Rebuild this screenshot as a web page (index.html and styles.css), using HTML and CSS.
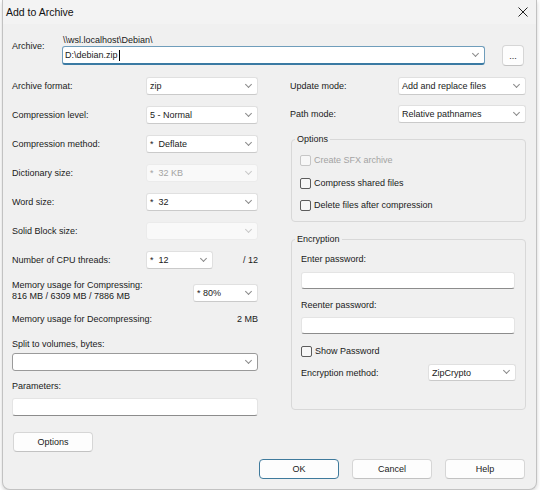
FILE: index.html
```html
<!DOCTYPE html>
<html>
<head>
<meta charset="utf-8">
<title>Add to Archive</title>
<link rel="stylesheet" href="styles.css">
</head>
<body>
<div class="window">
  <div class="titlebar">
    <span class="title">Add to Archive</span>
    <svg class="close" width="10" height="10" viewBox="0 0 10 10"><path d="M0.5 0.5 L9.5 9.5 M9.5 0.5 L0.5 9.5" stroke="#222" stroke-width="1" fill="none"/></svg>
  </div>

  <div class="archive">
    <div class="arch-label">Archive:</div>
    <div class="arch-main">
      <div class="arch-path">\\wsl.localhost\Debian\</div>
      <div class="combo focused"><span class="val">D:\debian.zip<span class="caret"></span></span><i class="chev"></i></div>
    </div>
    <button class="btn browse">...</button>
  </div>

  <div class="main">
    <div class="col-left">
      <div class="row"><span class="lbl">Archive format:</span><div class="combo w112"><span class="val">zip</span><i class="chev"></i></div></div>
      <div class="row"><span class="lbl">Compression level:</span><div class="combo w112"><span class="val">5 - Normal</span><i class="chev"></i></div></div>
      <div class="row"><span class="lbl">Compression method:</span><div class="combo w112"><span class="val">*&nbsp; Deflate</span><i class="chev"></i></div></div>
      <div class="row"><span class="lbl">Dictionary size:</span><div class="combo w112 disabled"><span class="val">*&nbsp; 32 KB</span><i class="chev"></i></div></div>
      <div class="row"><span class="lbl">Word size:</span><div class="combo w112"><span class="val">*&nbsp; 32</span><i class="chev"></i></div></div>
      <div class="row"><span class="lbl">Solid Block size:</span><div class="combo w112 disabled"><span class="val"></span><i class="chev"></i></div></div>
      <div class="row"><span class="lbl lbl-fixed">Number of CPU threads:</span><div class="combo w67"><span class="val">*&nbsp; 12</span><i class="chev"></i></div><span class="tail">/ 12</span></div>
      <div class="row mem"><span class="lbl two">Memory usage for Compressing:<br>816 MB / 6309 MB / 7886 MB</span><div class="combo w65"><span class="val">* 80%</span><i class="chev"></i></div></div>
      <div class="row decomp"><span class="lbl">Memory usage for Decompressing:</span><span class="tail">2 MB</span></div>
      <div class="lbl split-lbl">Split to volumes, bytes:</div>
      <div class="combo editable split"><span class="val"></span><i class="chev"></i></div>
      <div class="lbl param-lbl">Parameters:</div>
      <div class="edit param"></div>
    </div>

    <div class="col-right">
      <div class="row"><span class="lbl">Update mode:</span><div class="combo w128"><span class="val">Add and replace files</span><i class="chev"></i></div></div>
      <div class="row"><span class="lbl">Path mode:</span><div class="combo w128"><span class="val">Relative pathnames</span><i class="chev"></i></div></div>

      <fieldset class="group options">
        <legend>Options</legend>
        <div class="chk disabled"><span class="box"></span><span>Create SFX archive</span></div>
        <div class="chk"><span class="box"></span><span>Compress shared files</span></div>
        <div class="chk"><span class="box"></span><span>Delete files after compression</span></div>
      </fieldset>

      <fieldset class="group encryption">
        <legend>Encryption</legend>
        <div class="lbl">Enter password:</div>
        <div class="edit pw"></div>
        <div class="lbl pw-lbl2">Reenter password:</div>
        <div class="edit pw pw2"></div>
        <div class="chk show"><span class="box"></span><span>Show Password</span></div>
        <div class="row enc"><span class="lbl">Encryption method:</span><div class="combo w88"><span class="val">ZipCrypto</span><i class="chev"></i></div></div>
      </fieldset>
    </div>
  </div>

  <div class="footer">
    <button class="btn wide">Options</button>
    <div class="actions">
      <button class="btn wide default">OK</button>
      <button class="btn wide">Cancel</button>
      <button class="btn wide">Help</button>
    </div>
  </div>
</div>
</body>
</html>
```
FILE: styles.css
```css
* { box-sizing: border-box; }

body {
  margin: 0;
  background: #ffffff;
  font-family: "Liberation Sans", Arial, sans-serif;
  font-size: 9px;
  color: #1a1a1a;
}

.window {
  margin-left: 2px;
  width: 535px;
  height: 490px;
  background: #f0f0f0;
  border: 1px solid #c2c2c2;
  border-top: none;
  border-radius: 0 0 8px 8px;
  box-shadow: 0 2px 4px rgba(0, 0, 0, 0.18);
  overflow: hidden;
}

.titlebar {
  height: 24px;
  display: flex;
  align-items: center;
  justify-content: space-between;
  padding: 0 8px 0 3px;
  background: #f3f3f3;
}

.title {
  font-size: 10.5px;
  line-height: 12px;
  color: #111;
}

.close { display: block; }

.archive {
  display: flex;
  align-items: flex-start;
  height: 42px;
  padding: 10px 0 0 9px;
}

.arch-label {
  width: 50px;
  margin-top: 6px;
  line-height: 12px;
}

.arch-main { width: 423px; }

.arch-path {
  line-height: 12px;
  padding-left: 1px;
}

.combo {
  display: flex;
  align-items: center;
  justify-content: space-between;
  height: 18px;
  padding: 0 6px 0 3px;
  background: #ffffff;
  border: 1px solid #e0e0e0;
  border-bottom-color: #cacaca;
  border-radius: 3px;
  flex: none;
}

.combo .val {
  line-height: 12px;
  white-space: nowrap;
  display: flex;
  align-items: center;
}

.chev {
  display: block;
  width: 5px;
  height: 5px;
  border-right: 1px solid #8a8a8a;
  border-bottom: 1px solid #8a8a8a;
  transform: translateY(-2px) rotate(45deg);
  flex: none;
}

.combo.focused {
  height: 19px;
  border-color: #6f9dbb;
  border-bottom: 2px solid #3a7aa3;
  padding-left: 2px;
}

.caret {
  display: inline-block;
  width: 1px;
  height: 11px;
  margin-left: 1px;
  background: #000;
}

.combo.disabled {
  background: #f9f9f9;
  border-color: #ebebeb;
  color: #a3a3a3;
}

.combo.disabled .chev { border-color: #c8c8c8; }

.combo.editable {
  border: 1px solid #9a9a9a;
}

.w112 { width: 112px; }
.w67 { width: 67px; }
.w65 { width: 65px; }
.w128 { width: 128px; }
.w88 { width: 88px; margin-right: -1px; }

.btn {
  font-family: inherit;
  font-size: 9px;
  color: #1a1a1a;
  background: #fdfdfd;
  border: 1px solid #d6d6d6;
  border-bottom-color: #c2c2c2;
  border-radius: 4px;
  padding: 0;
  line-height: 12px;
}

.browse {
  width: 22px;
  height: 21px;
  margin-left: 17px;
  margin-top: 11px;
}

.main {
  display: grid;
  grid-template-columns: 246px 237px;
  column-gap: 32px;
  align-items: start;
  padding-left: 9px;
  margin-top: 11px;
}

.lbl { line-height: 12px; }

.row {
  display: flex;
  align-items: center;
  justify-content: space-between;
  height: 18px;
}

.col-left .row + .row { margin-top: 11px; }

.lbl-fixed { width: 134px; flex: none; }

.tail { margin-left: auto; line-height: 12px; }

.row.mem {
  height: 22px;
  align-items: flex-end;
}

.lbl.two { line-height: 11px; }

.row.decomp {
  height: 12px;
  margin-top: 10px;
}

.split-lbl { margin-top: 13px; }

.split { margin-top: 3px; width: 246px; }

.param-lbl { margin-top: 9px; }

.edit {
  background: #ffffff;
  border: 1px solid #e4e4e4;
  border-bottom-color: #8c8c8c;
  border-radius: 3px;
}

.param {
  height: 18px;
  margin-top: 6px;
}

.col-right .row { padding-right: 1px; }
.col-right .row + .row { margin-top: 10px; }

.group {
  margin: 10px 1px 0 1px;
  min-width: 0;
  border: 1px solid #d8d8d8;
  border-radius: 4px;
}

.group legend {
  padding: 0 2px;
  line-height: 12px;
  font-size: 9px;
}

.options {
  padding: 9px 10px 10px 8px;
}

.options legend { margin-left: -5px; }

.chk {
  display: flex;
  align-items: center;
  height: 12px;
  line-height: 12px;
}

.chk .box {
  width: 11px;
  height: 11px;
  margin-right: 3px;
  border: 1px solid #5c5c5c;
  border-radius: 2px;
  background: #f7f7f7;
}

.chk.disabled { color: #a3a3a3; }
.chk.disabled .box { border-color: #c6c6c6; }

.options .chk + .chk { margin-top: 11px; }
.options .chk + .chk + .chk { margin-top: 10px; }

.encryption {
  margin-top: 11px;
  padding: 8px 10px 28px 9px;
}

.encryption legend { margin-left: -6px; }

.pw {
  height: 17px;
  margin-top: 7px;
}

.pw-lbl2 { margin-top: 10px; }

.pw.pw2 { margin-top: 6px; }

.chk.show { margin-top: 11px; }

.row.enc {
  height: 17px;
  margin-top: 7px;
  padding-right: 0;
}

.row.enc .combo { height: 17px; }

.footer {
  margin-top: 16px;
  padding-left: 10px;
}

.wide {
  display: block;
  width: 80px;
  height: 20px;
}

.actions {
  display: flex;
  justify-content: flex-end;
  gap: 13px;
  margin-top: 7px;
  padding-right: 11px;
}

.btn.default {
  border: 1px solid #3f7a9c;
}
```
